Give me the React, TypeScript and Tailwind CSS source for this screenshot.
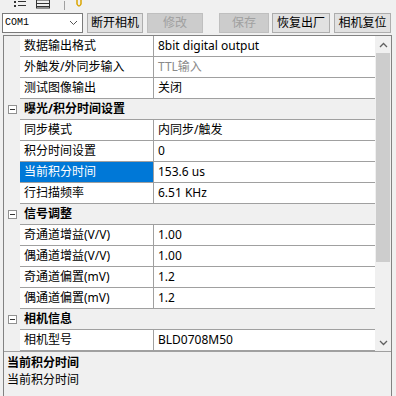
import React from "react";

type Item =
  | { cat: string }
  | { name: string; value: string; gray?: boolean; selected?: boolean };

const items: Item[] = [
  { name: "数据输出格式", value: "8bit digital output" },
  { name: "外触发/外同步输入", value: "TTL输入", gray: true },
  { name: "测试图像输出", value: "关闭" },
  { cat: "曝光/积分时间设置" },
  { name: "同步模式", value: "内同步/触发" },
  { name: "积分时间设置", value: "0" },
  { name: "当前积分时间", value: "153.6 us", selected: true },
  { name: "行扫描频率", value: "6.51 KHz" },
  { cat: "信号调整" },
  { name: "奇通道增益(V/V)", value: "1.00" },
  { name: "偶通道增益(V/V)", value: "1.00" },
  { name: "奇通道偏置(mV)", value: "1.2" },
  { name: "偶通道偏置(mV)", value: "1.2" },
  { cat: "相机信息" },
  { name: "相机型号", value: "BLD0708M50" },
];

function Minus() {
  return (
    <div className="w-[9px] h-[9px] border border-[#919191] bg-white flex items-center justify-center">
      <div className="w-[5px] h-px bg-[#333]" />
    </div>
  );
}

function Btn({ label, disabled, w }: { label: string; disabled?: boolean; w: string }) {
  return (
    <div
      className={
        "h-[20px] flex items-center justify-center border text-[12px] " +
        w +
        (disabled
          ? " bg-[#cccccc] border-[#bfbfbf] text-[#a0a0a0]"
          : " bg-[#e1e1e1] border-[#adadad] text-black")
      }
    >
      {label}
    </div>
  );
}

export default function App() {
  return (
    <div className="w-[396px] h-[396px] bg-[#f0f0f0] overflow-hidden flex flex-col font-['Noto_Sans','Noto_Sans_CJK_SC',sans-serif] text-[12px] leading-none text-black">
      {/* top toolbar (cut off) */}
      <div className="h-[10px] flex items-end gap-[10px] pl-[14px] overflow-hidden">
        <svg width="12" height="10" viewBox="0 0 12 10">
          <rect x="0" y="1" width="2" height="2" fill="#333" />
          <rect x="4" y="1" width="8" height="1" fill="#333" />
          <rect x="0" y="5" width="2" height="2" fill="#333" />
          <rect x="4" y="5" width="8" height="1" fill="#333" />
        </svg>
        <svg width="14" height="10" viewBox="0 0 14 10">
          <rect x="0.5" y="0" width="13" height="8" fill="none" stroke="#333" />
          <rect x="0" y="3" width="14" height="1" fill="#333" />
          <rect x="0" y="6" width="14" height="1" fill="#333" />
        </svg>
        <div className="w-px h-[9px] bg-[#a0a0a0] ml-[4px]" />
        <svg width="8" height="10" viewBox="0 0 8 10">
          <path d="M2 0 L2 4 Q4 8 6 4 L6 0" fill="none" stroke="#d9a400" strokeWidth="1.5" />
        </svg>
      </div>
      {/* controls row */}
      <div className="mt-[3px] flex items-center pl-[2px]">
        <div className="w-[81px] h-[20px] bg-white border border-[#7a7a7a] flex items-center justify-between pl-[2px] pr-[4px]">
          <span className="font-['Liberation_Mono',monospace] text-[10px]">COM1</span>
          <svg width="9" height="6" viewBox="0 0 9 6">
            <path d="M1 1 L4.5 4.5 L8 1" fill="none" stroke="#555" strokeWidth="1" />
          </svg>
        </div>
        <div className="ml-[4px]">
          <Btn label="断开相机" w="w-[56px]" />
        </div>
        <div className="ml-[4px]">
          <Btn label="修改" w="w-[56px]" disabled />
        </div>
        <div className="ml-[16px]">
          <Btn label="保存" w="w-[50px]" disabled />
        </div>
        <div className="ml-[3px]">
          <Btn label="恢复出厂" w="w-[58px]" />
        </div>
        <div className="ml-[4px]">
          <Btn label="相机复位" w="w-[57px]" />
        </div>
      </div>
      {/* property grid frame */}
      <div className="mt-[2px] ml-[3px] w-[389px] flex-1 border-x border-t border-[#828282] flex flex-col">
        <div className="flex border-b border-[#a0a0a0]">
          <div className="flex-1 flex flex-col">
            {items.map((it, i) =>
              "cat" in it ? (
                <div key={i} className="h-[21px] flex">
                  <div className="w-[16px] flex items-center justify-center">
                    <Minus />
                  </div>
                  <div className="flex-1 border-b border-[#a0a0a0] flex items-center pl-[4px] font-bold">
                    {it.cat}
                  </div>
                </div>
              ) : (
                <div key={i} className="h-[21px] flex">
                  <div className="w-[16px]" />
                  <div className="flex-1 flex border-b border-[#a0a0a0] bg-white">
                    <div
                      className={
                        "w-[134px] border-r border-[#a0a0a0] flex items-center pl-[4px] " +
                        (it.selected ? "bg-[#0078d7] text-white" : "")
                      }
                    >
                      {it.name}
                    </div>
                    <div
                      className={
                        "flex-1 flex items-center pl-[4px] " + (it.gray ? "text-[#8a8a8a]" : "")
                      }
                    >
                      {it.value}
                    </div>
                  </div>
                </div>
              )
            )}
          </div>
          {/* scrollbar */}
          <div className="w-[16px] bg-[#f0f0f0] flex flex-col">
            <div className="h-[17px] flex items-center justify-center">
              <svg width="9" height="6" viewBox="0 0 9 6">
                <path d="M1 5 L4.5 1.5 L8 5" fill="none" stroke="#606060" strokeWidth="1.3" />
              </svg>
            </div>
            <div className="h-[209px] mx-[1px] bg-[#cdcdcd]" />
            <div className="flex-1" />
            <div className="h-[17px] flex items-center justify-center">
              <svg width="9" height="6" viewBox="0 0 9 6">
                <path d="M1 1 L4.5 4.5 L8 1" fill="none" stroke="#606060" strokeWidth="1.3" />
              </svg>
            </div>
          </div>
        </div>
        {/* description */}
        <div className="flex-1 pt-[2px] pl-[3px] flex flex-col leading-[17px]">
          <div className="font-bold">当前积分时间</div>
          <div>当前积分时间</div>
        </div>
      </div>
    </div>
  );
}
